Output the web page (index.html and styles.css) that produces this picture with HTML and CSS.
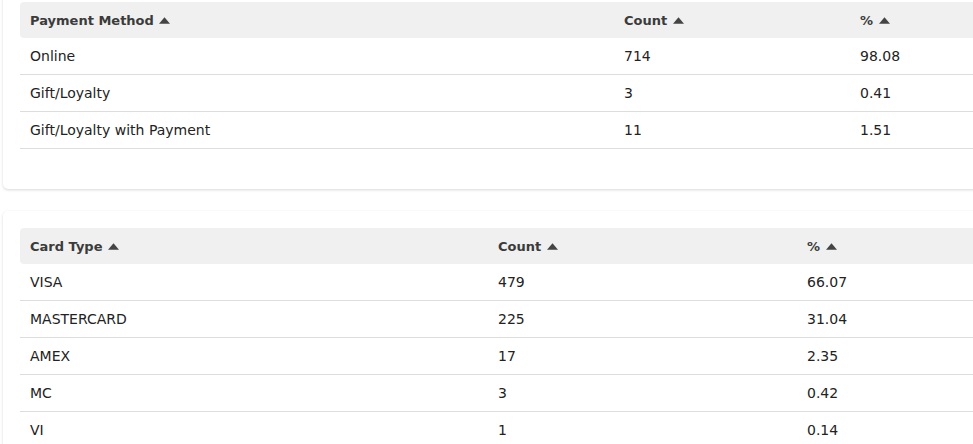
FILE: index.html
```html
<!DOCTYPE html>
<html>
<head>
<meta charset="utf-8">
<link rel="stylesheet" href="styles.css">
</head>
<body>
<div class="viewport">
  <div class="page">
    <section class="card">
      <table class="report pay">
        <thead>
          <tr>
            <th class="c1">Payment Method <svg class="sort" viewBox="0 0 12 7"><path d="M0 7 L6 0 L12 7 Z"/></svg></th>
            <th class="c2">Count <svg class="sort" viewBox="0 0 12 7"><path d="M0 7 L6 0 L12 7 Z"/></svg></th>
            <th class="c3">% <svg class="sort" viewBox="0 0 12 7"><path d="M0 7 L6 0 L12 7 Z"/></svg></th>
          </tr>
        </thead>
        <tbody>
          <tr><td>Online</td><td>714</td><td>98.08</td></tr>
          <tr><td>Gift/Loyalty</td><td>3</td><td>0.41</td></tr>
          <tr><td>Gift/Loyalty with Payment</td><td>11</td><td>1.51</td></tr>
        </tbody>
      </table>
    </section>
    <section class="card">
      <table class="report card-type">
        <thead>
          <tr>
            <th class="c1">Card Type <svg class="sort" viewBox="0 0 12 7"><path d="M0 7 L6 0 L12 7 Z"/></svg></th>
            <th class="c2">Count <svg class="sort" viewBox="0 0 12 7"><path d="M0 7 L6 0 L12 7 Z"/></svg></th>
            <th class="c3">% <svg class="sort" viewBox="0 0 12 7"><path d="M0 7 L6 0 L12 7 Z"/></svg></th>
          </tr>
        </thead>
        <tbody>
          <tr><td>VISA</td><td>479</td><td>66.07</td></tr>
          <tr><td>MASTERCARD</td><td>225</td><td>31.04</td></tr>
          <tr><td>AMEX</td><td>17</td><td>2.35</td></tr>
          <tr><td>MC</td><td>3</td><td>0.42</td></tr>
          <tr><td>VI</td><td>1</td><td>0.14</td></tr>
        </tbody>
      </table>
    </section>
  </div>
</div>
</body>
</html>
```
FILE: styles.css
```css
html, body {
  margin: 0;
  padding: 0;
  background: #ffffff;
}
body {
  font-family: "DejaVu Sans", "Open Sans", sans-serif;
  font-size: 14px;
  color: #222222;
}
.viewport {
  width: 973px;
  height: 444px;
  overflow: hidden;
}
.page {
  width: 1200px;
  margin-top: -15px;
  padding-left: 3px;
  display: flex;
  flex-direction: column;
  gap: 22px;
}
.card {
  background: #ffffff;
  border-radius: 5px;
  box-shadow: 0 1px 3px rgba(0, 0, 0, 0.16);
  padding: 17px 17px 40px 17px;
}
.report {
  width: 1120px;
  border-collapse: separate;
  border-spacing: 0;
  table-layout: fixed;
}
.report th {
  background: #f0f0f0;
  height: 36px;
  padding: 0 10px;
  text-align: left;
  font-size: 13px;
  font-weight: 700;
  color: #3b3b3b;
  white-space: nowrap;
}
.report th.c1 {
  border-radius: 4px 0 0 4px;
}
.report td {
  height: 36px;
  padding: 0 10px;
  border-bottom: 1px solid #dddddd;
  color: #222222;
  white-space: nowrap;
}
.sort {
  width: 11px;
  height: 7px;
  fill: #444444;
  margin-left: 1px;
  vertical-align: 1px;
}
.pay .c1 { width: 574px; }
.pay .c2 { width: 216px; }
.card-type .c1 { width: 448px; }
.card-type .c2 { width: 289px; }
```
